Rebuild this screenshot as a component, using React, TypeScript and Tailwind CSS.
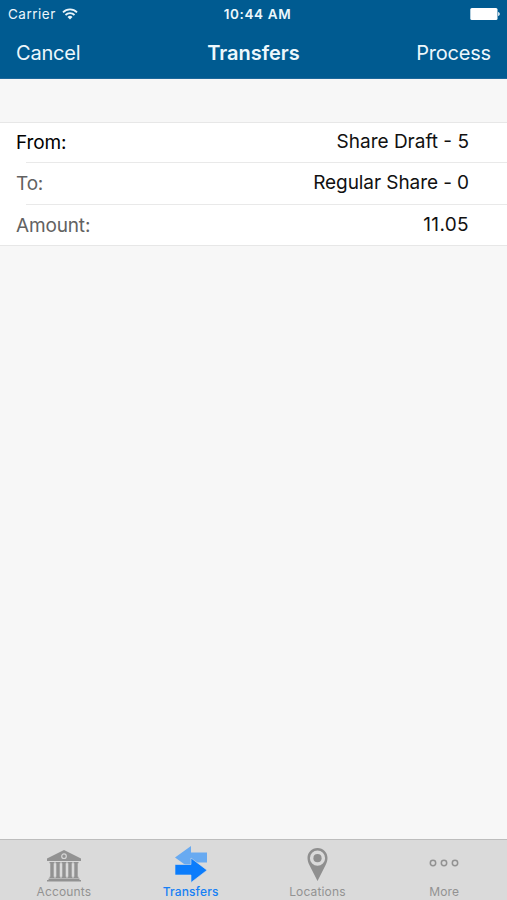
import React from 'react';
import clsx from 'clsx';

const rows = [
  { label: 'From:', value: 'Share Draft - 5', active: true, height: 'h-[39px]', spacing: '' },
  { label: 'To:', value: 'Regular Share - 0', active: false, height: 'h-[41px]', spacing: 'tracking-[-0.08px]' },
  { label: 'Amount:', value: '11.05', active: false, height: 'h-10', spacing: 'tracking-[0.35px]' },
];

const WifiIcon = () => (
  <svg width="16" height="12" viewBox="0 0 16 12" fill="none" stroke="#e9f5fb" strokeWidth="1.8">
    <path d="M1 4.3a10 10 0 0 1 14 0" />
    <path d="M3.5 7a6.4 6.4 0 0 1 9 0" />
    <path d="M8 11.6 5.5 9.1a3.5 3.5 0 0 1 5 0Z" fill="#e9f5fb" stroke="none" />
  </svg>
);

const BatteryIcon = () => (
  <svg width="30" height="12" viewBox="0 0 30 12" fill="#fff">
    <rect x="0.3" y="0" width="27.2" height="12" rx="1.5" />
    <path d="M28.200 4c2 .6 2 3.400 0 4Z" />
  </svg>
);

const BankIcon = () => (
  <svg width="36" height="32" viewBox="0 0 36 32" fill="#929292">
    <path d="M18 0 35 8.500V11H1V8.500Z" />
    <circle cx="18" cy="6.200" r="2.300" fill="none" stroke="#d5d5d5" strokeWidth="1.200" />
    <path d="M3.500 12h5v1.200h-.8v13.600h.8V28h-5v-1.200h.8V13.200h-.8Z" />
    <path d="M9.500 12h5v1.200h-.8v13.600h.8V28h-5v-1.200h.8V13.200h-.8Z" />
    <path d="M15.500 12h5v1.200h-.8v13.600h.8V28h-5v-1.200h.8V13.200h-.8Z" />
    <path d="M21.500 12h5v1.200h-.8v13.600h.8V28h-5v-1.200h.8V13.200h-.8Z" />
    <path d="M27.500 12h5v1.200h-.8v13.600h.8V28h-5v-1.200h.8V13.200h-.8Z" />
    <path d="M2.500 28.600h31V30h1.500v1.500H1V30h1.500Z" />
  </svg>
);

const TransferIcon = () => (
  <svg width="32" height="37" viewBox="0 0 32 37">
    <path d="M0 11.500 16 0v6.500h16v10H16V23Z" fill="#68aaf1" />
    <path d="M0 18.500h16V12l16 12.200L16 36.500V29H0Z" fill="#0b7cfb" stroke="#d9dde3" strokeWidth="0.600" />
  </svg>
);

const PinIcon = () => (
  <svg width="21" height="33" viewBox="0 0 21 33" fill="#8f8f8f">
    <path
      fillRule="evenodd"
      d="M10.500 0C16.300 0 20.500 4.500 20.500 10c0 2.500-.8 4.800-2 7.200L10.500 33l-8-15.800C1.300 14.800.5 12.500.5 10 .5 4.500 4.700 0 10.500 0Zm0 2.600a7.600 7.600 0 1 0 0 15.200 7.600 7.600 0 0 0 0-15.200Z"
    />
    <circle cx="10.500" cy="10.200" r="4.100" />
  </svg>
);

const MoreIcon = () => (
  <svg width="30" height="8" viewBox="0 0 30 8" fill="none" stroke="#929292" strokeWidth="1.500">
    <circle cx="4" cy="4" r="2.700" />
    <circle cx="15" cy="4" r="2.700" />
    <circle cx="26" cy="4" r="2.700" />
  </svg>
);

const tabs = [
  { name: 'Accounts', icon: <BankIcon />, iconBox: 'pt-[10px] pl-[2px]' },
  { name: 'Transfers', icon: <TransferIcon />, iconBox: 'pt-[6px] pl-[2px]', active: true },
  { name: 'Locations', icon: <PinIcon />, iconBox: 'pt-[8px] pl-[2px]' },
  { name: 'More', icon: <MoreIcon />, iconBox: 'pt-[19px]' },
];

const App: React.FC = () => {
  return (
    <div className="flex h-[900px] w-[507px] flex-col overflow-hidden bg-[#f7f7f7] font-['Inter',sans-serif]">
      <header className="h-[79px] shrink-0 border-b border-[#1d689b] bg-[#005b91] text-[#edf7fc]">
        <div className="grid h-7 grid-cols-3 items-center pl-2 pr-[7px] text-[13.5px]">
          <div className="flex items-center gap-[6px]">
            <span className="tracking-[0.5px]">Carrier</span>
            <WifiIcon />
          </div>
          <span className="pl-[7px] text-center font-semibold tracking-[0.62px]">10:44 AM</span>
          <div className="flex justify-end">
            <BatteryIcon />
          </div>
        </div>
        <div className="grid h-[50px] grid-cols-3 items-center px-4 text-[20px]">
          <span className="tracking-[-0.2px]">Cancel</span>
          <h1 className="text-center font-semibold">Transfers</h1>
          <span className="text-right tracking-[-0.2px]">Process</span>
        </div>
      </header>

      <main className="flex-1 pt-[43px]">
        <ul className="border-y border-[#e7e7e7] bg-white">
          {rows.map((row, i) => (
            <li key={row.label}>
              {i > 0 && <div className="ml-[26px] h-px bg-[#e9e9e9]" />}
              <div className={clsx('flex items-center justify-between pl-4 pr-[38px] text-[19px]', row.height)}>
                <span className={clsx('pt-[2px] tracking-[-0.15px]', row.active ? 'text-black' : 'text-[#626262]')}>
                  {row.label}
                </span>
                <span className={clsx('text-[#111]', row.spacing)}>{row.value}</span>
              </div>
            </li>
          ))}
        </ul>
      </main>

      <nav className="grid h-[61px] shrink-0 grid-cols-4 border-t border-[#bdbdbd] bg-[#dadada]">
        {tabs.map((tab) => (
          <div key={tab.name} className="flex flex-col items-center">
            <div className={clsx('h-[44px]', tab.iconBox)}>{tab.icon}</div>
            <span
              className={clsx(
                'pl-px text-[12px] leading-4 tracking-[0.15px]',
                tab.active ? 'font-medium text-[#1680f5]' : 'text-[#929292]'
              )}
            >
              {tab.name}
            </span>
          </div>
        ))}
      </nav>
    </div>
  );
};

export default App;
